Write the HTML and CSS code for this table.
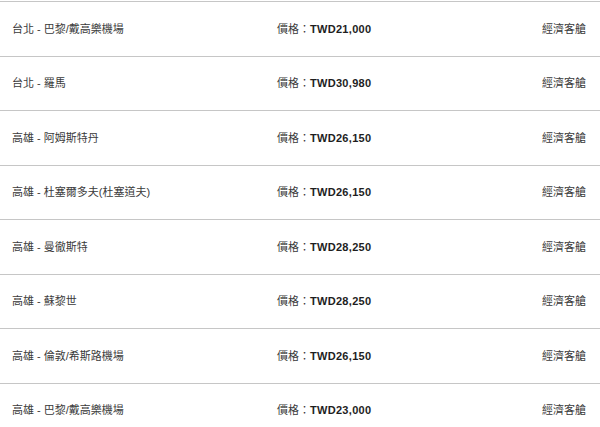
FILE: index.html
```html
<!DOCTYPE html>
<html lang="zh-Hant">
<head>
<meta charset="utf-8">
<link rel="stylesheet" href="styles.css">
</head>
<body>
<div class="list">
  <div class="row"><span class="route">台北 - 巴黎/戴高樂機場</span><span class="price">價格：<b>TWD21,000</b></span><span class="cabin">經濟客艙</span></div>
  <div class="row"><span class="route">台北 - 羅馬</span><span class="price">價格：<b>TWD30,980</b></span><span class="cabin">經濟客艙</span></div>
  <div class="row"><span class="route">高雄 - 阿姆斯特丹</span><span class="price">價格：<b>TWD26,150</b></span><span class="cabin">經濟客艙</span></div>
  <div class="row"><span class="route">高雄 - 杜塞爾多夫(杜塞道夫)</span><span class="price">價格：<b>TWD26,150</b></span><span class="cabin">經濟客艙</span></div>
  <div class="row"><span class="route">高雄 - 曼徹斯特</span><span class="price">價格：<b>TWD28,250</b></span><span class="cabin">經濟客艙</span></div>
  <div class="row"><span class="route">高雄 - 蘇黎世</span><span class="price">價格：<b>TWD28,250</b></span><span class="cabin">經濟客艙</span></div>
  <div class="row"><span class="route">高雄 - 倫敦/希斯路機場</span><span class="price">價格：<b>TWD26,150</b></span><span class="cabin">經濟客艙</span></div>
  <div class="row"><span class="route">高雄 - 巴黎/戴高樂機場</span><span class="price">價格：<b>TWD23,000</b></span><span class="cabin">經濟客艙</span></div>
</div>
</body>
</html>
```
FILE: styles.css
```css
html, body {
  margin: 0;
  padding: 0;
  background: #fff;
  overflow: hidden;
}
body {
  font-family: "Liberation Sans", "Noto Sans CJK TC", sans-serif;
  font-size: 11px;
  color: #3a3a3a;
}
.list {
  padding-top: 1px;
}
.row {
  display: grid;
  grid-template-columns: 265px 1fr auto;
  align-items: center;
  border-top: 1px solid #c6c6c6;
  padding: 17.5px 14px 17.5px 12px;
  line-height: 18.57px;
}
.price b {
  font-weight: bold;
  color: #1e1e1e;
  letter-spacing: 0.3px;
}
.cabin {
  text-align: right;
}
```
